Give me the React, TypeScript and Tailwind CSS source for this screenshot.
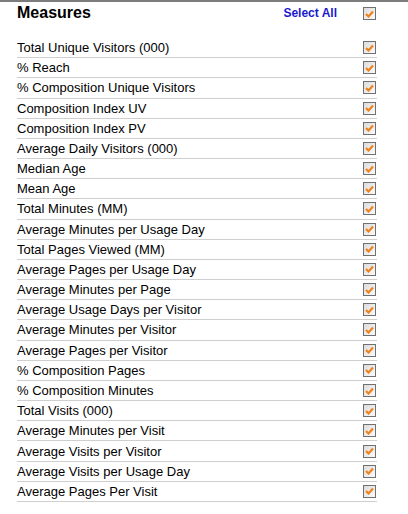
const measures = [
  "Total Unique Visitors (000)",
  "% Reach",
  "% Composition Unique Visitors",
  "Composition Index UV",
  "Composition Index PV",
  "Average Daily Visitors (000)",
  "Median Age",
  "Mean Age",
  "Total Minutes (MM)",
  "Average Minutes per Usage Day",
  "Total Pages Viewed (MM)",
  "Average Pages per Usage Day",
  "Average Minutes per Page",
  "Average Usage Days per Visitor",
  "Average Minutes per Visitor",
  "Average Pages per Visitor",
  "% Composition Pages",
  "% Composition Minutes",
  "Total Visits (000)",
  "Average Minutes per Visit",
  "Average Visits per Visitor",
  "Average Visits per Usage Day",
  "Average Pages Per Visit",
];

function CheckBox() {
  return (
    <span className="flex h-[13px] w-[13px] items-center justify-center border border-[#707070] bg-gradient-to-br from-[#dcdcdc] to-[#fbfbfb]">
      <svg width="9" height="8" viewBox="0 0 9 8">
        <path d="M1 4 L3.5 6.5 L8 1.5" fill="none" stroke="#f0821c" strokeWidth="2.2" />
      </svg>
    </span>
  );
}

export default function App() {
  return (
    <div className="h-[514px] w-[408px] border-t-2 border-[#7c7c7c] bg-white font-['Liberation_Sans',Arial,sans-serif] text-black">
      <div className="ml-[17px] w-[360px]">
        <div className="flex h-[36px] items-start pt-[2px]">
          <h2 className="flex-1 text-[16px] font-bold leading-[18px]">Measures</h2>
          <a className="mr-[26px] mt-[2px] text-[12px] font-bold leading-[14px] text-[#1a1acc]">Select All</a>
          <span className="mr-px mt-[3px]">
            <CheckBox />
          </span>
        </div>
        {measures.map((m) => (
          <div key={m} className="flex h-[20.18px] items-center border-b border-[#cfcfcf] text-[13px] leading-[15px]">
            <span className="flex-1">{m}</span>
            <span className="mr-px">
              <CheckBox />
            </span>
          </div>
        ))}
      </div>
    </div>
  );
}
